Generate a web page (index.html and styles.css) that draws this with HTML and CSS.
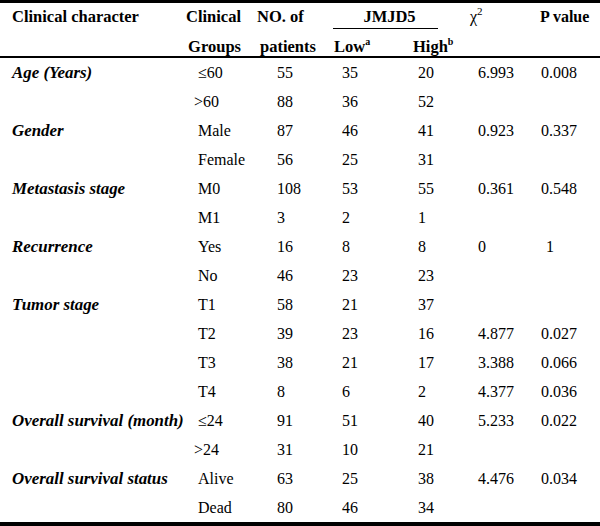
FILE: index.html
```html
<!DOCTYPE html>
<html>
<head>
<meta charset="utf-8">
<link rel="stylesheet" href="styles.css">
</head>
<body>
<div class="table">
  <div class="head">
    <div class="row hrow1">
      <div class="c1 b">Clinical character</div>
      <div class="c2h b">Clinical</div>
      <div class="c3h1 b">NO. of</div>
      <div class="jm b"><div class="jm-line">JMJD5</div></div>
      <div class="c6h">χ<sup class="sq">2</sup></div>
      <div class="c7h b pv">P value</div>
    </div>
    <div class="row hrow2">
      <div class="c1"></div>
      <div class="c2h b">Groups</div>
      <div class="c3h2 b">patients</div>
      <div class="c4h b">Low<sup class="sup">a</sup></div>
      <div class="c5h b">High<sup class="sup">b</sup></div>
      <div></div>
      <div></div>
    </div>
  </div>
  <div class="body">
    <div class="row"><div class="c1 bi">Age (Years)</div><div class="c2">≤60</div><div class="c3">55</div><div class="c4">35</div><div class="c5">20</div><div class="c6">6.993</div><div class="c7">0.008</div></div>
    <div class="row"><div class="c1"></div><div class="c2 lt">&gt;60</div><div class="c3">88</div><div class="c4">36</div><div class="c5">52</div><div class="c6"></div><div class="c7"></div></div>
    <div class="row"><div class="c1 bi">Gender</div><div class="c2">Male</div><div class="c3">87</div><div class="c4">46</div><div class="c5">41</div><div class="c6">0.923</div><div class="c7">0.337</div></div>
    <div class="row"><div class="c1"></div><div class="c2">Female</div><div class="c3">56</div><div class="c4">25</div><div class="c5">31</div><div class="c6"></div><div class="c7"></div></div>
    <div class="row"><div class="c1 bi">Metastasis stage</div><div class="c2">M0</div><div class="c3">108</div><div class="c4">53</div><div class="c5">55</div><div class="c6">0.361</div><div class="c7">0.548</div></div>
    <div class="row"><div class="c1"></div><div class="c2">M1</div><div class="c3">3</div><div class="c4">2</div><div class="c5">1</div><div class="c6"></div><div class="c7"></div></div>
    <div class="row"><div class="c1 bi">Recurrence</div><div class="c2">Yes</div><div class="c3">16</div><div class="c4">8</div><div class="c5">8</div><div class="c6">0</div><div class="c7 p1">1</div></div>
    <div class="row"><div class="c1"></div><div class="c2">No</div><div class="c3">46</div><div class="c4">23</div><div class="c5">23</div><div class="c6"></div><div class="c7"></div></div>
    <div class="row"><div class="c1 bi">Tumor stage</div><div class="c2">T1</div><div class="c3">58</div><div class="c4">21</div><div class="c5">37</div><div class="c6"></div><div class="c7"></div></div>
    <div class="row"><div class="c1"></div><div class="c2">T2</div><div class="c3">39</div><div class="c4">23</div><div class="c5">16</div><div class="c6">4.877</div><div class="c7">0.027</div></div>
    <div class="row"><div class="c1"></div><div class="c2">T3</div><div class="c3">38</div><div class="c4">21</div><div class="c5">17</div><div class="c6">3.388</div><div class="c7">0.066</div></div>
    <div class="row"><div class="c1"></div><div class="c2">T4</div><div class="c3">8</div><div class="c4">6</div><div class="c5">2</div><div class="c6">4.377</div><div class="c7">0.036</div></div>
    <div class="row"><div class="c1 bi">Overall survival (month)</div><div class="c2">≤24</div><div class="c3">91</div><div class="c4">51</div><div class="c5">40</div><div class="c6">5.233</div><div class="c7">0.022</div></div>
    <div class="row"><div class="c1"></div><div class="c2 lt">&gt;24</div><div class="c3">31</div><div class="c4">10</div><div class="c5">21</div><div class="c6"></div><div class="c7"></div></div>
    <div class="row"><div class="c1 bi">Overall survival status</div><div class="c2">Alive</div><div class="c3">63</div><div class="c4">25</div><div class="c5">38</div><div class="c6">4.476</div><div class="c7">0.034</div></div>
    <div class="row"><div class="c1"></div><div class="c2">Dead</div><div class="c3">80</div><div class="c4">46</div><div class="c5">34</div><div class="c6"></div><div class="c7"></div></div>
  </div>
</div>
</body>
</html>
```
FILE: styles.css
```css
html, body {
  margin: 0;
  padding: 0;
  background: #fff;
}
body {
  font-family: "Liberation Serif", "Times New Roman", serif;
  font-size: 16px;
  color: #000;
  width: 600px;
}
.table {
  border-top: 3px solid #000;
  border-bottom: 4px solid #000;
}
.head {
  border-bottom: 2px solid #000;
}
.row {
  display: grid;
  grid-template-columns: 180px 75px 75px 80px 55px 70px 65px;
  height: 29px;
  line-height: 29px;
  white-space: nowrap;
}
.hrow1 {
  height: 27px;
  line-height: 27px;
}
.hrow2 {
  height: 26px;
  line-height: 19px;
  padding-top: 7px;
  box-sizing: border-box;
}
.b { font-weight: bold; font-size: 16.5px; }
.bi { font-weight: bold; font-style: italic; font-size: 16.9px; }
.pv { font-size: 16px; }
.c1 { padding-left: 12px; }
.c2 { padding-left: 18px; }
.c2.lt { padding-left: 14px; }
.c3 { padding-left: 22px; }
.c4 { padding-left: 12px; }
.c5 { padding-left: 8px; }
.c6 { padding-left: 13px; }
.c7 { padding-left: 6px; }
.p1 { padding-left: 11px; }
.c2h { text-align: right; padding-right: 14px; }
.c3h1 { padding-left: 2px; }
.c3h2 { padding-left: 5px; }
.c4h { padding-left: 4px; }
.c5h { padding-left: 3px; }
.c6h { padding-left: 5px; }
.c7h { padding-left: 5px; }
.jm {
  grid-column: span 2;
}
.jm-line {
  margin-left: 3px;
  margin-right: 27px;
  padding-left: 8px;
  text-align: center;
  height: 25px;
  line-height: 27px;
  border-bottom: 1.5px solid #000;
}
.sq {
  font-size: 11px;
  line-height: 0;
  vertical-align: 7px;
}
.sup {
  font-size: 10px;
  line-height: 0;
  vertical-align: 7px;
}
```
